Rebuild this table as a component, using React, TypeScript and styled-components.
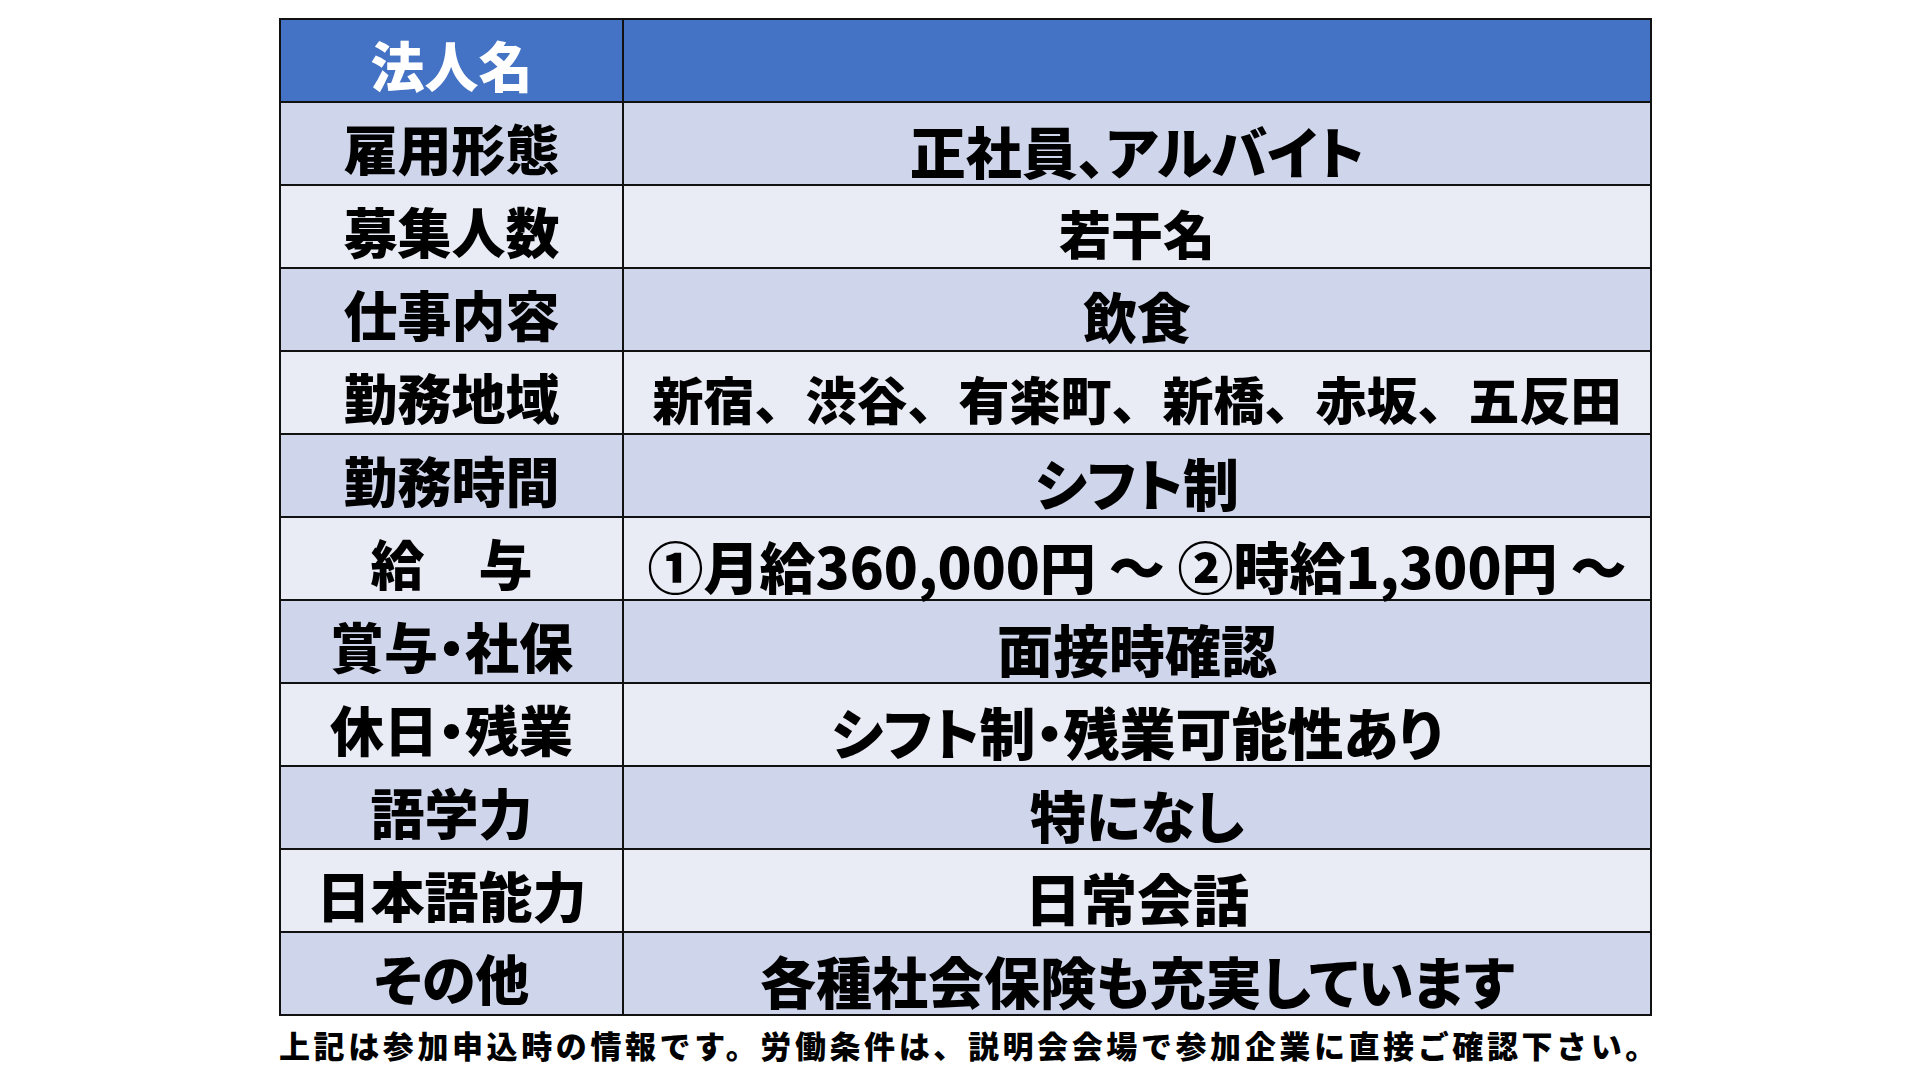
import React from 'react'
import styled, { createGlobalStyle } from 'styled-components'

const GlobalStyle = createGlobalStyle`
  html, body {
    margin: 0;
    padding: 0;
    background: #ffffff;
  }
  body {
    font-family: 'Noto Sans CJK JP', 'Noto Sans', sans-serif;
    color: #000000;
  }
`

const Page = styled.div`
  width: 1920px;
  height: 1080px;
  box-sizing: border-box;
  padding: 18px 0 0 279px;
`

const Table = styled.table`
  border-collapse: collapse;
  table-layout: fixed;
  width: 1373px;
  border: 2px solid #111111;
`

const Row = styled.tr<{ $tone: 'head' | 'dark' | 'light' }>`
  height: 83px;
  background: ${(p) => (p.$tone === 'head' ? '#4472c4' : p.$tone === 'dark' ? '#cfd5ea' : '#e9ebf5')};
  color: ${(p) => (p.$tone === 'head' ? '#ffffff' : '#000000')};
`

const LabelCell = styled.td`
  width: 343px;
  box-sizing: border-box;
  padding: 8px 0 0;
  border: 2px solid #111111;
  text-align: center;
  vertical-align: middle;
  font-size: 54px;
  font-weight: 900;
  line-height: 1;
  white-space: nowrap;
  font-feature-settings: 'palt' 1;
`

const ValueCell = styled.td<{ $size?: number; $palt?: boolean }>`
  box-sizing: border-box;
  padding: 12px 0 0;
  border: 2px solid #111111;
  text-align: center;
  vertical-align: middle;
  font-size: ${(p) => p.$size ?? 56}px;
  font-weight: 900;
  line-height: 1;
  white-space: nowrap;
  font-feature-settings: ${(p) => (p.$palt === false ? 'normal' : "'palt' 1")};
`

const Note = styled.p`
  margin: 10px 0 0;
  font-size: 31px;
  font-weight: 900;
  letter-spacing: 3.6px;
  line-height: 1.2;
  white-space: nowrap;
`

const rows: { label: string; value: string; size?: number; palt?: boolean }[] = [
  { label: '雇用形態', value: '正社員、アルバイト' },
  { label: '募集人数', value: '若干名', size: 52 },
  { label: '仕事内容', value: '飲食', size: 54 },
  { label: '勤務地域', value: '新宿、渋谷、有楽町、新橋、赤坂、五反田', size: 51, palt: false },
  { label: '勤務時間', value: 'シフト制' },
  { label: '給　与', value: '①月給360,000円 ～ ②時給1,300円 ～', palt: false },
  { label: '賞与・社保', value: '面接時確認' },
  { label: '休日・残業', value: 'シフト制・残業可能性あり' },
  { label: '語学力', value: '特になし' },
  { label: '日本語能力', value: '日常会話' },
  { label: 'その他', value: '各種社会保険も充実しています' },
]

const App: React.FC = () => {
  return (
    <Page>
      <GlobalStyle />
      <Table>
        <tbody>
          <Row $tone="head">
            <LabelCell>法人名</LabelCell>
            <ValueCell />
          </Row>
          {rows.map((r, i) => (
            <Row key={r.label} $tone={i % 2 === 0 ? 'dark' : 'light'}>
              <LabelCell>{r.label}</LabelCell>
              <ValueCell $size={r.size} $palt={r.palt}>
                {r.value}
              </ValueCell>
            </Row>
          ))}
        </tbody>
      </Table>
      <Note>上記は参加申込時の情報です。労働条件は、説明会会場で参加企業に直接ご確認下さい。</Note>
    </Page>
  )
}

export default App
